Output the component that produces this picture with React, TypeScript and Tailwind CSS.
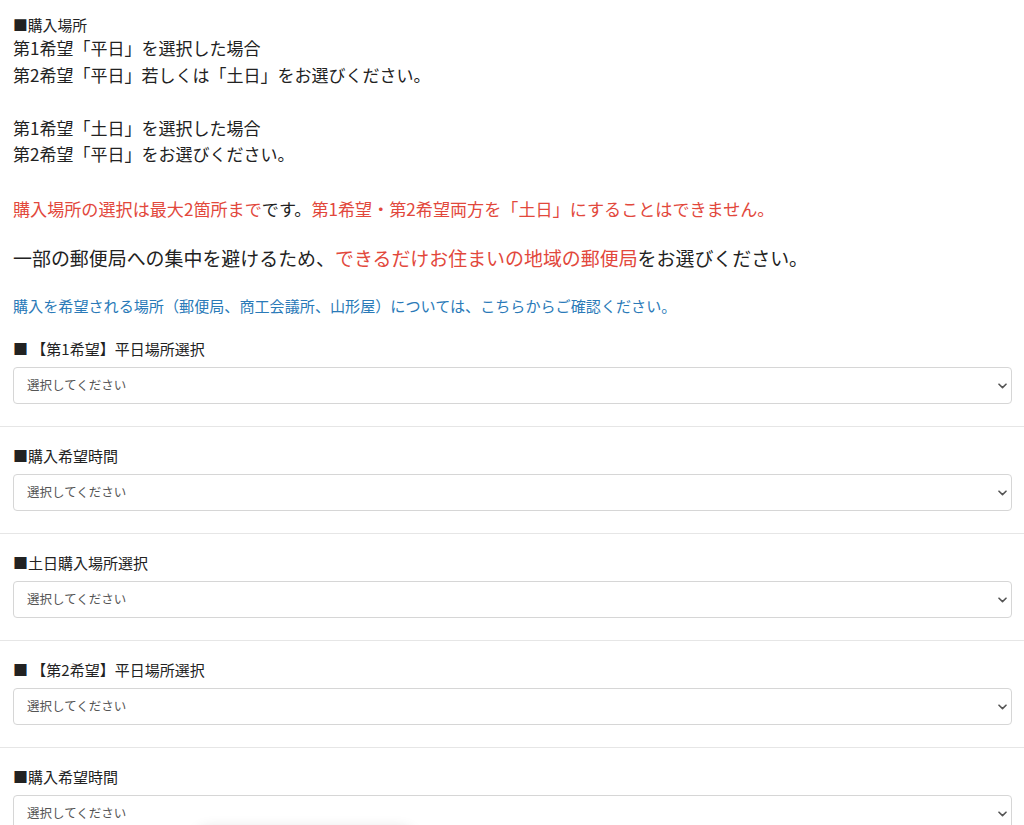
import React from 'react'

const font = { fontFamily: '"Noto Sans CJK JP", "Noto Sans", sans-serif' }

// form sections below the notes
const fields = [
  '■ 【第1希望】平日場所選択',
  '■購入希望時間',
  '■土日購入場所選択',
  '■ 【第2希望】平日場所選択',
  '■購入希望時間',
]

const SelectBox: React.FC = () => (
  <div className="relative">
    <select
      defaultValue=""
      className="block w-full h-[37px] appearance-none rounded-[4px] border border-[#d6d6d6] bg-white pl-[13px] pr-8 text-[12.5px] text-[#555] outline-none"
      style={font}
    >
      <option value="">選択してください</option>
    </select>
    <svg
      className="pointer-events-none absolute right-[5px] top-1/2 -translate-y-1/2"
      width="9"
      height="6"
      viewBox="0 0 9 6"
      fill="none"
    >
      <path d="M1 1.2l3.5 3.4L8 1.2" stroke="#555" strokeWidth="1.6" strokeLinecap="round" strokeLinejoin="round" />
    </svg>
  </div>
)

export default function App() {
  return (
    <div className="relative h-[825px] overflow-hidden bg-white text-[#222]" style={font}>
      <div className="pl-[13px] pr-[12px] pt-[14px]">
        <p className="text-[14.8px] leading-[21px]">■購入場所</p>
        <div className="text-[17px] leading-[26.5px]">
          <p>第1希望「平日」を選択した場合</p>
          <p>第2希望「平日」若しくは「土日」をお選びください。</p>
          <p>&nbsp;</p>
          <p>第1希望「土日」を選択した場合</p>
          <p>第2希望「平日」をお選びください。</p>
        </div>
        <p className="mt-[28px] text-[17.1px] leading-[26.5px]">
          <span className="text-[#e2483c]">購入場所の選択は最大2箇所まで</span>です。
          <span className="text-[#e2483c]">第1希望・第2希望両方を「土日」にすることはできません。</span>
        </p>
        <p className="mt-[21px] text-[18.95px] leading-[30px]">
          一部の郵便局への集中を避けるため、
          <span className="text-[#e2483c]">できるだけお住まいの地域の郵便局</span>をお選びください。
        </p>
        <p className="mt-[20px] text-[15.1px] leading-[24px] text-[#2a7ab8]">
          購入を希望される場所（郵便局、商工会議所、山形屋）については、こちらからご確認ください。
        </p>
      </div>

      <div className="mt-[21px]">
        {fields.map((label, i) => (
          <div key={i} className={i > 0 ? 'border-t border-[#e6e6e6] pt-[18px]' : ''}>
            <div className="pl-[13px] pr-[12px] pb-[22px]">
              <p className="text-[15px] leading-[21px] mb-[8px]">{label}</p>
              <SelectBox />
            </div>
          </div>
        ))}
      </div>

      {/* shadow of floating element below the fold */}
      <div className="absolute left-[195px] top-[828px] h-[30px] w-[220px] rounded-full bg-white shadow-[0_0_14px_rgba(0,0,0,0.12)]" />
    </div>
  )
}
